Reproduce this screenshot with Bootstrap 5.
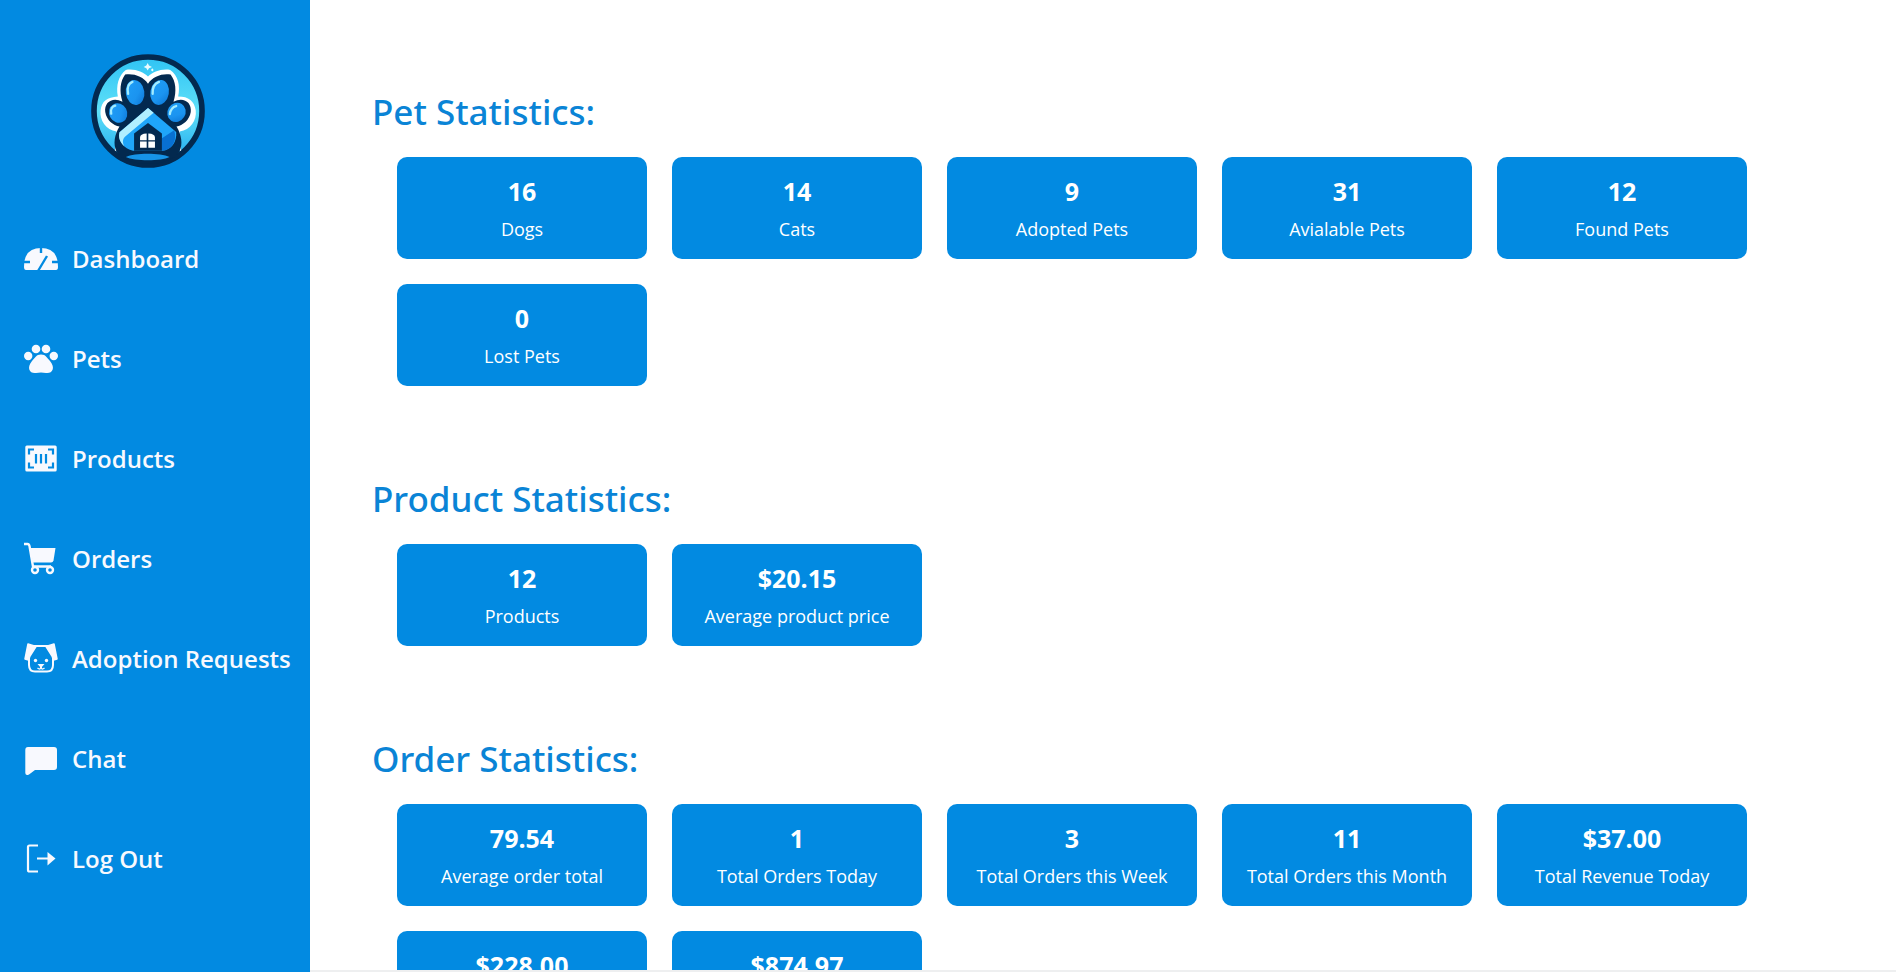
<!DOCTYPE html>
<html lang="en">
<head>
<meta charset="utf-8">
<meta name="viewport" content="width=device-width, initial-scale=1">
<title>Dashboard</title>
<link href="https://cdn.jsdelivr.net/npm/bootstrap@5.3.0/dist/css/bootstrap.min.css" rel="stylesheet">
<style>
:root { --brand: #028ae1; --ink: #03294f; }
body { font-family: "Open Sans", "Noto Sans", sans-serif; }
.sidebar { width: 310px; background: var(--brand); }
.brand-logo { width: 114px; height: 114px; }
.side-link { height: 100px; padding: 0 24px; gap: 14px; color: #f8f9fe; font-size: 24px; font-weight: 600; white-space: nowrap; }
.side-link:hover { color: #fff; }
.side-link svg { width: 34px; height: 34px; flex: none; }
.brand-box { padding: 54px 0 41px; margin-right: 14px; }
.content { border-bottom: 2px solid #eeeff0; padding: 88px 62px 0; }
.stat-section { margin-bottom: 89px; }
.stat-title { color: #0a84d6; font-family: "Noto Sans", sans-serif; font-size: 35px; line-height: 48px; font-weight: 500; margin: 0; }
.stat-grid { gap: 25px; padding: 21px 0 0 25px; }
.stat-card { width: 250px; height: 102px; border-radius: 10px; background: var(--brand); color: #fff; }
.stat-value { font-size: 25px; line-height: 36px; font-weight: 700; margin: 0 0 7px; }
.stat-label { font-size: 18px; line-height: 27px; margin: 0; }
</style>
</head>
<body>
<div class="d-flex vh-100 overflow-hidden">
  <nav class="sidebar flex-shrink-0" aria-label="Main">
    <div class="brand-box text-center">
      <svg class="brand-logo d-block mx-auto" viewBox="33 28 344 344" role="img" aria-label="Pet home logo">
        <defs>
          <linearGradient id="sky" x1="0" y1="0" x2="0" y2="1"><stop offset="0" stop-color="#2fc3f4"/><stop offset=".5" stop-color="#5fe0f8"/><stop offset="1" stop-color="#1ba4ee"/></linearGradient>
          <linearGradient id="pad" x1="0" y1="0" x2="1" y2="1"><stop offset="0" stop-color="#1f9ff8"/><stop offset=".6" stop-color="#1b94f0"/><stop offset="1" stop-color="#0b74d4"/></linearGradient>
        </defs>
        <circle cx="205" cy="200" r="163" fill="url(#sky)" stroke="#03294f" stroke-width="17"/>
        <path d="M110 262C78 258 58 228 62 198C65 170 82 158 114 156C108 124 116 92 138 76C166 72 190 82 205 96C220 82 244 72 272 76C296 92 303 124 296 156C328 156 345 170 349 198C353 228 333 258 301 262L305 320H105Z" fill="#fff"/>
        <path d="M136 90C163 86 191 96 205 118C219 96 247 86 273 90C289 110 292 140 282 172C310 156 338 172 334 203C330 228 310 243 291 247C306 271 311 300 300 322C270 372 140 372 110 322C99 300 104 271 119 247C100 243 80 228 76 203C72 172 100 156 128 172C118 140 121 110 136 90Z" fill="#03294f"/>
        <g fill="url(#pad)">
          <ellipse cx="166" cy="144" rx="28" ry="38" transform="rotate(-8 166 144)"/>
          <ellipse cx="240" cy="144" rx="28" ry="38" transform="rotate(10 240 144)"/>
          <ellipse cx="115" cy="206" rx="27" ry="30" transform="rotate(-28 115 206)"/>
          <ellipse cx="291" cy="204" rx="27" ry="30" transform="rotate(32 291 204)"/>
        </g>
        <g fill="none" stroke="#a3ecff" stroke-width="7" stroke-linecap="round">
          <path d="M145 148C141 128 148 116 158 112M219 148C218 128 228 116 238 112M94 208C91 194 98 186 106 184M271 209C273 196 281 187 290 185"/>
        </g>
        <path d="M205 191L290 263C293 292 276 317 247 320H160C132 314 113 288 119 264Z" fill="#1fa5f9"/>
        <path d="M247 282L284 258C294 292 276 318 247 320Z" fill="#0870d2"/>
        <path d="M205 191L222 205L139 275C126 284 128 299 134 307C119 294 115 278 119 264Z" fill="#b0efff"/>
        <path d="M163 320V268L205 236L247 268V320Z" fill="#03294f"/>
        <path d="M181 288V280Q181 269 201 268V288ZM206 288V268Q226 269 226 280V288ZM181 292H201V311H181ZM206 292H226V311H206Z" fill="#fff"/>
        <path d="M138 339C165 326 242 326 270 339C245 352 165 352 138 339Z" fill="#1694e8"/>
        <path d="M204 55L208 63L217 67L208 71L204 78L200 71L192 67L200 63ZM218 71L222 76L218 81L214 76Z" fill="#e9fcff"/>
      </svg>
    </div>
    <div class="nav flex-column flex-nowrap">
      <a class="side-link d-flex align-items-center text-decoration-none" href="#dashboard">
        <svg viewBox="0 0 34 34" aria-hidden="true"><path d="M2 28Q0 28 0 25Q0 6 17 6Q34 6 34 25Q34 28 32 28Z" fill="#f8f9fe"/><path d="M17 5V11M0 20H6M28 20H34M14 29L23 14" fill="none" stroke="#028ae1" stroke-width="2.400"/></svg>
        <span>Dashboard</span></a>
      <a class="side-link d-flex align-items-center text-decoration-none" href="#pets">
        <svg viewBox="0 0 34 34" fill="#f8f9fe" aria-hidden="true"><circle cx="12" cy="7" r="4.300"/><circle cx="22" cy="7" r="4.300"/><circle cx="4.200" cy="14" r="4.200"/><circle cx="29.800" cy="14" r="4.200"/><path d="M17 12.500C22 12.500 23 16 26 19C32 26 28 32 22 31Q17 30 12 31C6 32 2 26 8 19C11 16 12 12.500 17 12.500Z"/></svg>
        <span>Pets</span></a>
      <a class="side-link d-flex align-items-center text-decoration-none" href="#products">
        <svg viewBox="0 0 34 34" aria-hidden="true"><rect x="1.300" y="3.500" width="31.400" height="26" rx="1.500" fill="#f8f9fe"/><path d="M10 7.500H5V12.500M24 7.500H29V12.500M5 20.500V25.500H10M29 20.500V25.500H24M12 12V21.500M17 12V21.500M22 12V21.500" fill="none" stroke="#028ae1" stroke-width="2.200"/></svg>
        <span>Products</span></a>
      <a class="side-link d-flex align-items-center text-decoration-none" href="#orders">
        <svg viewBox="0 0 34 34" aria-hidden="true"><path d="M6 6H31.500L29.500 18.500Q29 20.500 27 20.500H9Z" fill="#f8f9fe"/><g fill="none" stroke="#f8f9fe" stroke-width="2.400"><path d="M0 2H3.500Q5 2 5.500 4L9 24.500H27"/><circle cx="11" cy="28" r="3"/><circle cx="26" cy="28" r="3"/></g></svg>
        <span>Orders</span></a>
      <a class="side-link d-flex align-items-center text-decoration-none" href="#adoption-requests">
        <svg viewBox="0 0 34 34" aria-hidden="true"><path d="M4 2L12 4.500L6 14L4.500 18L1 17ZM30 2L22 4.500L28 14L29.500 18L33 17Z" fill="#f8f9fe" stroke="#f8f9fe" stroke-width="1.500" stroke-linejoin="round"/><path d="M10 4H24M5 15V23Q5 29.500 11 29.500H23Q29 29.500 29 23V15M17 25V27" fill="none" stroke="#f8f9fe" stroke-width="2"/><path d="M13.500 26Q16 28 17 26Q18 28 20.500 26" fill="none" stroke="#f8f9fe" stroke-width="1.400"/><circle cx="11.500" cy="18.500" r="1.700" fill="#f8f9fe"/><circle cx="22.500" cy="18.500" r="1.700" fill="#f8f9fe"/><path d="M13.500 22H20.500L17 26Z" fill="#f8f9fe"/></svg>
        <span>Adoption Requests</span></a>
      <a class="side-link d-flex align-items-center text-decoration-none" href="#chat">
        <svg viewBox="0 0 34 34" aria-hidden="true"><path d="M4 5H30Q33 5 33 8V25Q33 28 30 28H11L5 32.500Q1.500 34 1.300 31V8Q1.300 5 4 5Z" fill="#f8f9fe"/></svg>
        <span>Chat</span></a>
      <a class="side-link d-flex align-items-center text-decoration-none" href="#logout">
        <svg viewBox="0 0 34 34" aria-hidden="true"><path d="M14 3.500H5.500Q4 3.500 4 5V28Q4 29.500 5.500 29.500H14M13 16.500H25" fill="none" stroke="#f8f9fe" stroke-width="2.200"/><path d="M23.500 10L31.500 16.500L23.500 23.500Z" fill="#f8f9fe"/></svg>
        <span>Log Out</span></a>
    </div>
  </nav>
  <main class="content flex-grow-1 overflow-hidden">
    <section class="stat-section">
      <h2 class="stat-title">Pet Statistics:</h2>
      <div class="stat-grid d-flex flex-wrap text-center">
        <div class="stat-card d-flex flex-column justify-content-center"><h3 class="stat-value">16</h3><p class="stat-label">Dogs</p></div>
        <div class="stat-card d-flex flex-column justify-content-center"><h3 class="stat-value">14</h3><p class="stat-label">Cats</p></div>
        <div class="stat-card d-flex flex-column justify-content-center"><h3 class="stat-value">9</h3><p class="stat-label">Adopted Pets</p></div>
        <div class="stat-card d-flex flex-column justify-content-center"><h3 class="stat-value">31</h3><p class="stat-label">Avialable Pets</p></div>
        <div class="stat-card d-flex flex-column justify-content-center"><h3 class="stat-value">12</h3><p class="stat-label">Found Pets</p></div>
        <div class="stat-card d-flex flex-column justify-content-center"><h3 class="stat-value">0</h3><p class="stat-label">Lost Pets</p></div>
      </div>
    </section>
    <section class="stat-section">
      <h2 class="stat-title">Product Statistics:</h2>
      <div class="stat-grid d-flex flex-wrap text-center">
        <div class="stat-card d-flex flex-column justify-content-center"><h3 class="stat-value">12</h3><p class="stat-label">Products</p></div>
        <div class="stat-card d-flex flex-column justify-content-center"><h3 class="stat-value">$20.15</h3><p class="stat-label">Average product price</p></div>
      </div>
    </section>
    <section class="stat-section">
      <h2 class="stat-title">Order Statistics:</h2>
      <div class="stat-grid d-flex flex-wrap text-center">
        <div class="stat-card d-flex flex-column justify-content-center"><h3 class="stat-value">79.54</h3><p class="stat-label">Average order total</p></div>
        <div class="stat-card d-flex flex-column justify-content-center"><h3 class="stat-value">1</h3><p class="stat-label">Total Orders Today</p></div>
        <div class="stat-card d-flex flex-column justify-content-center"><h3 class="stat-value">3</h3><p class="stat-label">Total Orders this Week</p></div>
        <div class="stat-card d-flex flex-column justify-content-center"><h3 class="stat-value">11</h3><p class="stat-label">Total Orders this Month</p></div>
        <div class="stat-card d-flex flex-column justify-content-center"><h3 class="stat-value">$37.00</h3><p class="stat-label">Total Revenue Today</p></div>
        <div class="stat-card d-flex flex-column justify-content-center"><h3 class="stat-value">$228.00</h3><p class="stat-label">Total Revenue this Week</p></div>
        <div class="stat-card d-flex flex-column justify-content-center"><h3 class="stat-value">$874.97</h3><p class="stat-label">Total Revenue this Month</p></div>
      </div>
    </section>
  </main>
</div>
<script src="https://cdn.jsdelivr.net/npm/bootstrap@5.3.0/dist/js/bootstrap.bundle.min.js"></script>
</body>
</html>
